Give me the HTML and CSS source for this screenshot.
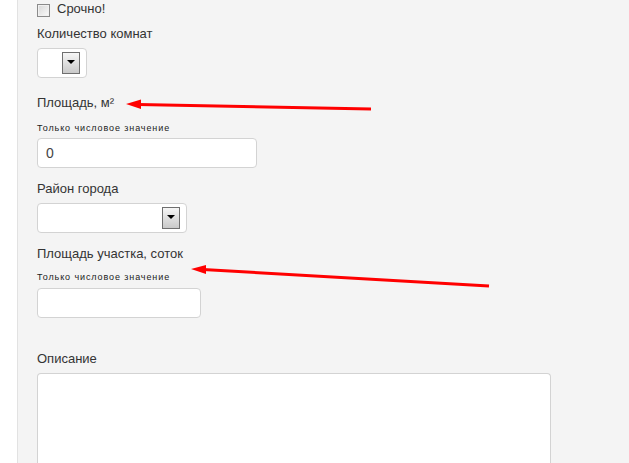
FILE: index.html
```html
<!DOCTYPE html>
<html lang="ru">
<head>
<meta charset="utf-8">
<link rel="stylesheet" href="styles.css">
</head>
<body>
<div class="panel">
  <label class="check-row">
    <span class="checkbox"></span>
    <span class="check-text">Срочно!</span>
  </label>

  <div class="label l-rooms">Количество комнат</div>
  <div class="select select-small"><span class="select-btn"><span class="tri"></span></span></div>

  <div class="label l-area">Площадь, м²</div>
  <div class="hint h-area">Только числовое значение</div>
  <div class="input input-area">0</div>

  <div class="label l-district">Район города</div>
  <div class="select select-wide"><span class="select-btn"><span class="tri"></span></span></div>

  <div class="label l-plot">Площадь участка, соток</div>
  <div class="hint h-plot">Только числовое значение</div>
  <div class="input input-plot"></div>

  <div class="label l-desc">Описание</div>
  <div class="textarea"></div>
</div>

<svg class="annotations" width="629" height="463" viewBox="0 0 629 463">
  <line x1="371" y1="109" x2="138" y2="104.5" stroke="#ff0000" stroke-width="3"/>
  <polygon points="126,104 141,99.5 141,109" fill="#ff0000"/>
  <line x1="489" y1="286" x2="203" y2="269.5" stroke="#ff0000" stroke-width="3"/>
  <polygon points="191,269 206,265 206,274" fill="#ff0000"/>
</svg>
</body>
</html>
```

FILE: styles.css
```css
html, body {
  margin: 0;
  padding: 0;
  background: #ffffff;
}

body {
  position: relative;
  width: 629px;
  height: 463px;
  overflow: hidden;
  font-family: "Liberation Sans", Arial, sans-serif;
  color: #333333;
}

.panel {
  margin-left: 17px;
  border-left: 1px solid #e2e2e2;
  background: #f4f4f4;
  padding: 1px 0 0 19px;
  height: 463px;
  box-sizing: border-box;
  overflow: hidden;
}

.check-row {
  display: flex;
  align-items: center;
  height: 16px;
}

.checkbox {
  width: 11px;
  height: 11px;
  border: 1px solid #8a8a8a;
  background: linear-gradient(135deg, #d6d6d6, #fbfbfb);
  box-shadow: inset 0 0 0 1px #f0f0f0;
  margin-top: 2px;
}

.check-text {
  font-size: 13px;
  line-height: 16px;
  margin-left: 7px;
}

.label {
  font-size: 13px;
  line-height: 16px;
  height: 16px;
}

.l-rooms { margin-top: 9px; }
.l-area { margin-top: 17px; }
.l-district { margin-top: 13px; }
.l-plot { margin-top: 13px; }
.l-desc { margin-top: 33px; }

.hint {
  font-size: 9px;
  line-height: 12px;
  height: 12px;
  letter-spacing: 0.9px;
  color: #222222;
}

.h-area { margin-top: 11px; }
.h-plot { margin-top: 9px; }

.select {
  box-sizing: border-box;
  height: 30px;
  margin-top: 6px;
  background: #ffffff;
  border: 1px solid #d3d3d3;
  border-radius: 4px;
  display: flex;
  justify-content: flex-end;
  align-items: flex-start;
  padding: 3px 6px 0 0;
}

.select-small { width: 50px; }
.select-wide { width: 150px; }

.select-btn {
  box-sizing: border-box;
  width: 18px;
  height: 22px;
  border: 1px solid #6f6f6f;
  background: linear-gradient(#f6f6f6, #c9c9c9);
  display: flex;
  justify-content: center;
  padding-top: 7px;
}

.tri {
  width: 0;
  height: 0;
  border-left: 4px solid transparent;
  border-right: 4px solid transparent;
  border-top: 4px solid #000000;
}

.input {
  box-sizing: border-box;
  height: 30px;
  background: #ffffff;
  border: 1px solid #d3d3d3;
  border-radius: 4px;
  font-size: 14px;
  line-height: 28px;
  padding-left: 8px;
  color: #444444;
}

.input-area { width: 220px; margin-top: 4px; }
.input-plot { width: 164px; margin-top: 5px; }

.textarea {
  box-sizing: border-box;
  width: 514px;
  height: 90px;
  margin-top: 6px;
  background: #ffffff;
  border: 1px solid #d3d3d3;
  border-bottom: 0;
  border-radius: 4px 4px 0 0;
}

.annotations {
  position: absolute;
  left: 0;
  top: 0;
  pointer-events: none;
}
```
